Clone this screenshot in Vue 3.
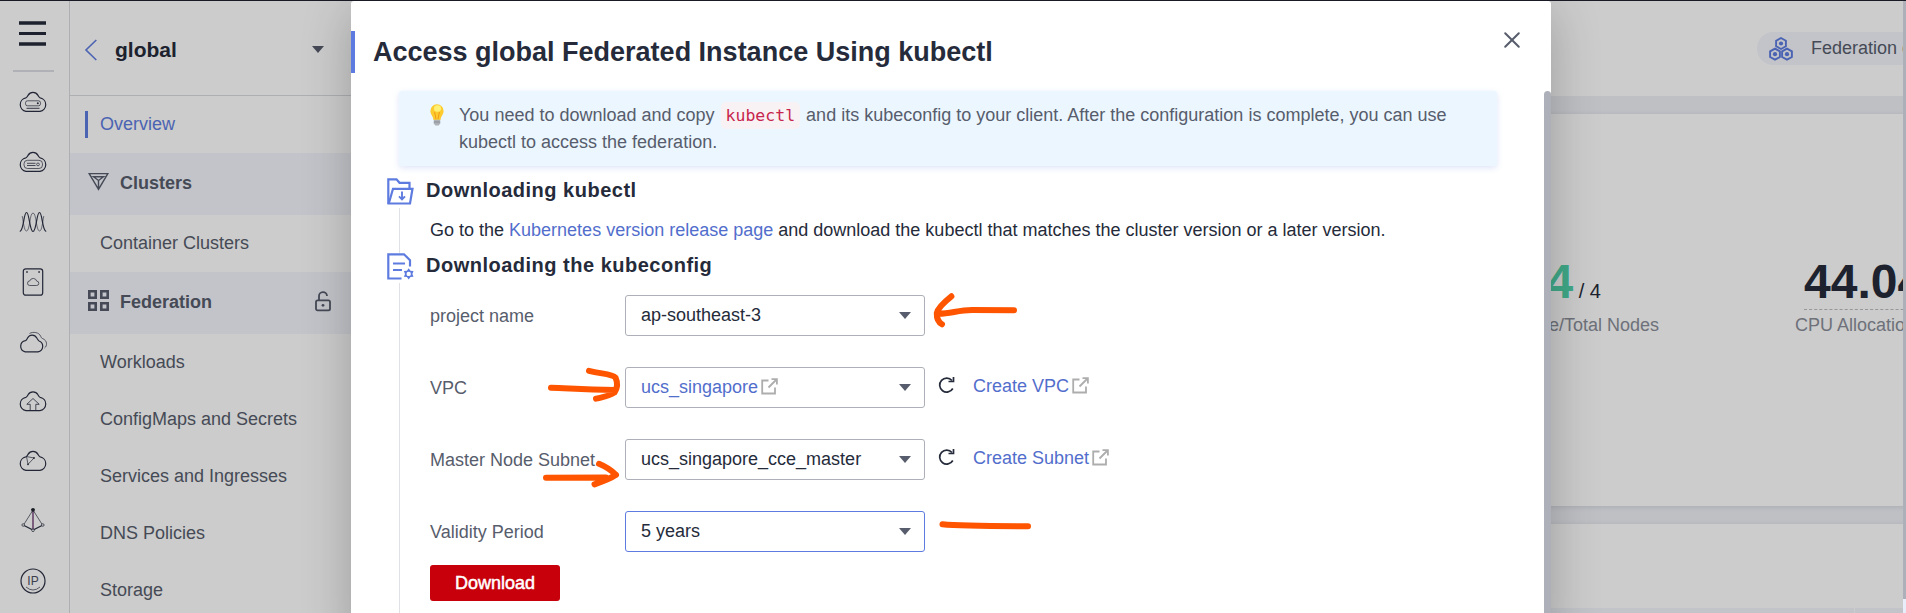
<script setup>
const navItems = [
  { text: 'Overview', kind: 'active' },
  { text: 'Clusters', kind: 'group', icon: 'clusters' },
  { text: 'Container Clusters', kind: 'item' },
  { text: 'Federation', kind: 'group', icon: 'grid', lock: true },
  { text: 'Workloads', kind: 'item' },
  { text: 'ConfigMaps and Secrets', kind: 'item' },
  { text: 'Services and Ingresses', kind: 'item' },
  { text: 'DNS Policies', kind: 'item' },
  { text: 'Storage', kind: 'item' },
]
const rail = ['server', 'server2', 'wave', 'disk', 'clouds', 'upload', 'cdn', 'pyramid', 'ip']
const fields = [
  { label: 'project name', value: 'ap-southeast-3' },
  { label: 'VPC', value: 'ucs_singapore', link: true, create: 'Create VPC' },
  { label: 'Master Node Subnet', value: 'ucs_singapore_cce_master', create: 'Create Subnet' },
  { label: 'Validity Period', value: '5 years', focus: true },
]
const cloud = 'M7 23.3H21A6.8 6.8 0 0 0 21.2 9.9C20 9.6 20 8.800 19 7.400C16.700 3.400 11.300 3.400 9 7.400C8 8.800 8 9.600 6.800 9.900A6.800 6.800 0 0 0 7 23.300Z'
</script>

<template>
  <div class="screen">
    <aside class="rail">
      <svg class="burger" width="27" height="25" viewBox="0 0 27 25" fill="#252b3a"><path d="M0 .3H27V3.700H0zM0 11H27V14H0zM0 21.300H27V24.700H0z" /></svg>
      <div class="rule"></div>
      <div v-for="name in rail" :key="name" class="rail-cell">
        <svg width="28" height="28" viewBox="0 0 28 28" fill="none" stroke="#2b3044" stroke-width="1.200">
          <g v-if="name === 'server'">
            <path :d="cloud" />
            <rect x="6.500" y="12.800" width="15" height="5" rx="2" stroke-width=".7" />
            <circle cx="18.800" cy="15.300" r="1" fill="#2b3044" stroke="none" />
            <path d="M7.500 20.300h13" stroke-width=".9" />
          </g>
          <g v-else-if="name === 'server2'">
            <path :d="cloud" />
            <rect x="5" y="12.300" width="18.500" height="8.200" rx="3.500" stroke-width=".7" />
            <path d="M8 15.300h8.500M8 17.500h8.500" stroke-width=".8" />
            <circle cx="19" cy="16.400" r="1.400" stroke-width=".7" />
          </g>
          <g v-else-if="name === 'wave'">
            <path d="M.8 23.500C5 22.500 4.500 4.500 7.500 4.500S10.500 23.500 14 23.500S17.500 4.500 20.500 4.500S23 22.500 27.200 23.500" />
            <path d="M3.200 8C4.500 14 5 23 7.500 23C11 23 10.500 5 14 5S17 23 20.500 23C23 23 23.500 14 24.800 8" stroke-width=".6" />
          </g>
          <g v-else-if="name === 'disk'">
            <rect x="4.300" y=".8" width="19.400" height="26.400" rx="2.500" />
            <path d="M10.800 17.500h6.700a2.200 2.200 0 0 0 .2-4.400a3.600 3.600 0 0 0-6.900-.2a2.300 2.300 0 0 0 0 4.600Z" stroke-width=".7" />
            <path d="M7.200 4h1.600M19.300 4h1.600" stroke-width="1.600" />
          </g>
          <g v-else-if="name === 'clouds'">
            <path d="M6.200 23.800H19A5.600 5.600 0 0 0 20 13C19.400 13 19 11.800 18 10.200C15.500 5.800 10.700 6.300 8.700 9.800C7.800 11.500 7.500 12.400 6.500 12.600A5.700 5.700 0 0 0 6.200 23.800Z" />
            <path d="M10.500 5.500C14 3.500 20 4 21.800 8.500C22.300 9.700 22.500 10 23.500 10.500C28.500 12.500 28.500 18 25.500 20" stroke-width=".7" />
          </g>
          <g v-else-if="name === 'upload'">
            <path :d="cloud" transform="translate(0 .4)" />
            <path d="M11.200 23.500V17.300H7.800L14 11.500L20.200 17.300H16.800V23.500" stroke-width=".8" />
          </g>
          <g v-else-if="name === 'cdn'">
            <path :d="cloud" />
            <path d="M7.500 9.500L15 11L9 17.300Z" stroke-width=".7" />
            <circle cx="15" cy="11" r=".9" fill="#2b3044" stroke="none" />
            <circle cx="9" cy="17.300" r=".9" fill="#2b3044" stroke="none" />
          </g>
          <g v-else-if="name === 'pyramid'">
            <path d="M14 3L4.500 18M14 3L23.500 18" stroke-width=".7" />
            <path d="M14 3V22" stroke="#632a68" stroke-width="1.300" />
            <path d="M5 18.500L14 23L23 18.500" />
            <circle cx="14" cy="2.800" r="1.900" fill="#20232f" stroke="none" />
            <g fill="#fff" stroke-width=".7"><circle cx="4.200" cy="18" r="1.300" /><circle cx="14" cy="23.300" r="1.300" /><circle cx="23.800" cy="18" r="1.300" /></g>
          </g>
          <g v-else>
            <circle cx="14" cy="14" r="12" />
            <path d="M7 20Q14 26 21 20" stroke-width=".7" />
            <text class="ip" x="14" y="17.800" text-anchor="middle">IP</text>
          </g>
        </svg>
      </div>
    </aside>

    <nav class="nav">
      <header class="nav-head">
        <svg width="12" height="22" viewBox="0 0 12 22" fill="none" stroke="#5e7ce0" stroke-width="1.600"><path d="M11.300 1L1 11L11.300 21" /></svg>
        <b>global</b>
        <i class="caret"></i>
      </header>
      <div v-for="n in navItems" :key="n.text" class="nav-row" :class="n.kind">
        <svg v-if="n.icon === 'clusters'" class="nav-icon" width="21" height="22" viewBox="0 0 21 22" fill="none" stroke="#575d6c" stroke-width="1.400">
          <path d="M1.200 3.600H19.800L10.500 19.300ZM5.500 6.800H15.500L10.500 10.500ZM10.500 10.500V18.500" />
        </svg>
        <svg v-else-if="n.icon === 'grid'" class="nav-icon" width="21" height="22" viewBox="0 0 21 22" fill="none" stroke="#575d6c" stroke-width="2.600">
          <path d="M1.300 2.300h6.400v6.400h-6.400zM13.300 2.300h6.400v6.400h-6.400zM1.300 14.300h6.400v6.400h-6.400zM13.300 14.300h6.400v6.400h-6.400z" />
        </svg>
        <span>{{ n.text }}</span>
        <svg v-if="n.lock" class="lock" width="16" height="20" viewBox="0 0 16 20" fill="none" stroke="#575d6c" stroke-width="1.800">
          <rect x="1" y="9.300" width="14" height="10" rx="1.600" /><path d="M4 9V5.300A4 4 0 0 1 12 5" /><circle cx="8" cy="14.300" r="1.400" fill="#575d6c" stroke="none" />
        </svg>
      </div>
    </nav>

    <main class="main">
      <div class="topbar">
        <div class="pill">
          <svg width="24" height="24" viewBox="0 0 24 24" fill="none" stroke="#5e7ce0" stroke-width="1.900">
            <g v-for="(p, i) in [[12, 6.5], [6, 17.2], [18, 17.2]]" :key="i" :transform="`translate(${p[0]} ${p[1]})`">
              <path d="M0-5.500L4.900-2.800V2.800L0 5.500L-4.900 2.800V-2.800Z" /><circle r="2.100" fill="#5e7ce0" stroke="none" />
            </g>
          </svg>
          <span>Federation enabled</span>
        </div>
      </div>
      <section class="card stats">
        <div class="stat nodes">
          <div class="num"><b>4</b><span> / 4</span></div>
          <label>Available/Total Nodes</label>
        </div>
        <div class="stat cpu">
          <div class="num"><b>44.04</b></div>
          <label>CPU Allocation</label>
        </div>
      </section>
      <section class="card lower"><div class="thead"><i></i></div></section>
    </main>

    <div class="mask"></div>
    <div class="page-scroll"><i></i></div>

    <div class="dialog">
      <header class="dialog-head">
        <h1>Access global Federated Instance Using kubectl</h1>
        <svg class="close" width="16" height="16" viewBox="0 0 16 16" stroke="#575d6c" stroke-width="2" stroke-linecap="round"><path d="M1.200 1.200L14.800 14.800M14.800 1.200L1.200 14.800" /></svg>
      </header>
      <div class="body">
        <div class="info">
          <svg width="14" height="22" viewBox="0 0 14 22">
            <path d="M7 .3A6.600 6.600 0 0 0 .4 7C.4 10.300 3 12 3.500 16H10.500C11 12 13.600 10.300 13.600 7A6.600 6.600 0 0 0 7 .3Z" fill="#fdcb2e" />
            <ellipse cx="7.500" cy="4.500" rx="3.500" ry="3.200" fill="#fff176" />
            <path d="M4.600 8L6 15M9.400 8L8 15" stroke="#f29b18" stroke-width="1" />
            <path d="M3.800 15.800H10.200V19.500L8.700 21.500H5.300L3.800 19.500Z" fill="#aeb2b8" />
            <path d="M3.800 18H10.200" stroke="#7d858c" stroke-width=".8" />
          </svg>
          <p>You need to download and copy <code>kubectl</code> and its kubeconfig to your client. After the configuration is complete, you can use kubectl to access the federation.</p>
        </div>

        <div class="step first">
          <div class="side">
            <svg width="27" height="27" viewBox="0 0 27 27" fill="none" stroke="#5e7ce0" stroke-width="2.200">
              <path d="M1.300 26V1.300H9.500L12.500 4.800H22.500V10.500" /><path d="M1.800 25.500L6 10.800H25.500L23 25.500Z" /><path d="M15 13.500V21M12 18.300L15 21.300L18 18.300" stroke-width="1.900" />
            </svg>
            <i></i>
          </div>
          <div class="content">
            <h2>Downloading kubectl</h2>
            <p class="para">Go to the <a>Kubernetes version release page</a> and download the kubectl that matches the cluster version or a later version.</p>
          </div>
        </div>

        <div class="step second">
          <div class="side">
            <svg width="27" height="27" viewBox="0 0 27 27" fill="none" stroke="#5e7ce0" stroke-width="2.200">
              <path d="M14.500 25.500H1.300V1.300H17L23 7.300V13.500" /><path d="M6 10.500H18M6 17H15" />
              <path d="M21.700 15.300L23.500 17.700L26.500 18L25.400 20.900L26.500 23.700L23.500 24L21.700 26.500L19.900 24L16.900 23.700L18 20.900L16.900 18L19.900 17.700Z" fill="#5e7ce0" stroke="none" />
              <circle cx="21.700" cy="20.900" r="2.200" fill="#fff" stroke="none" />
            </svg>
            <i></i>
          </div>
          <div class="content">
            <h2>Downloading the kubeconfig</h2>
            <div class="form">
              <div v-for="f in fields" :key="f.label" class="field">
                <label>{{ f.label }}</label>
                <div class="select" :class="{ focus: f.focus }">
                  <span :class="{ link: f.link }">{{ f.value }}</span>
                  <svg v-if="f.link" class="ext" width="17" height="17" viewBox="0 0 17 17" fill="none" stroke="#adadad" stroke-width="1.800"><path d="M7.500 2.500H1.200V15.500H14V9.500" /><path d="M7.500 9.500L15.500 1.500M10.500 1.200H15.900V6.500" /></svg>
                  <i class="caret"></i>
                </div>
                <template v-if="f.create">
                  <svg class="refresh" width="17" height="18" viewBox="0 0 17 18" fill="none" stroke="#252b3a" stroke-width="1.700"><path d="M14.800 12.500A7 7 0 1 1 14 4.500" /><path d="M15.500 1V5.500H10.500" /></svg>
                  <a>{{ f.create }}</a>
                  <svg class="ext out" width="17" height="17" viewBox="0 0 17 17" fill="none" stroke="#adadad" stroke-width="1.800"><path d="M7.500 2.500H1.200V15.500H14V9.500" /><path d="M7.500 9.500L15.500 1.500M10.500 1.200H15.900V6.500" /></svg>
                </template>
              </div>
            </div>
            <button>Download</button>
          </div>
        </div>
      </div>
      <div class="dialog-scroll"></div>
    </div>

    <!-- hand-drawn markers -->
    <svg class="ink" width="1906" height="613" viewBox="0 0 1906 613" fill="none" stroke="#ff5500" stroke-width="6" stroke-linecap="round" stroke-linejoin="round">
      <path d="M951.400 296.300Q938 307 936.800 313Q936.500 321 942 324.300M938 313.700C950 314 958 310 972 310L1014 310.300" />
      <path d="M551 387.800C567 388 580 389.800 615 390M589 370.800C602 374 612 374 615.500 377.500C617.500 382 617.500 388 614.500 392.500C610 396 603 397 596 398.700" />
      <path d="M546 477.800L606 477.500M599 463.800Q609 468 616 474.800M616 474.800Q610 479 594.500 484.300" />
      <path d="M942.500 524.300Q960 526.200 1028 526.200" />
    </svg>
  </div>
</template>

<style>
html, body { overflow: hidden; }
</style>

<style scoped>
* { box-sizing: border-box; }
.screen { position: relative; display: flex; width: 1906px; height: 613px; overflow: hidden; background: #fff; border-top: 1px solid #191a25; font: 18px/27px "Liberation Sans", Arial, sans-serif; color: #252b3a; }
p, h1, h2 { margin: 0; }
svg { display: block; flex: none; overflow: visible; }
a, .link { color: #526ecc; }
.caret { width: 0; height: 0; border: 6px solid transparent; border-top: 7px solid #575d6c; border-bottom: 0; }

.rail { width: 70px; flex: none; border-right: 1px solid #dadbe0; display: flex; flex-direction: column; align-items: flex-start; padding-top: 20px; }
.burger { margin-left: 19px; }
.rule { width: 41px; height: 2px; flex: none; margin: 24px 0 0 13px; background: #dddee4; }
.rail-cell { width: 65px; height: 59.900px; display: flex; align-items: center; justify-content: center; flex: none; }
.ip { font-size: 12px; font-weight: 400; fill: #4b5062; stroke: none; }

.nav { width: 281px; flex: none; }
.nav-head { height: 95px; border-bottom: 1px solid #dadbe0; display: flex; align-items: center; padding: 4px 27px 0 15px; }
.nav-head b { font-size: 21px; margin: -1px 0 0 18px; }
.nav-head .caret { margin: -1px 0 0 auto; }
.nav-row { height: 57px; display: flex; align-items: center; padding: 0 0 1px 30px; color: #575d6c; }
.nav-row.active { color: #5e7ce0; padding-left: 15px; }
.nav-row.active::before { content: ""; width: 3px; height: 27px; background: #5e7ce0; margin-right: 12px; }
.nav-row.group { height: 62px; background: #f3f5fc; font-weight: 700; padding: 0 20px 2px 18px; }
.nav-row.group span { margin-left: 11px; }
.nav-icon { margin-top: -4px; }
.lock { margin-left: auto; margin-top: -3px; }

.main { flex: 1; min-width: 0; background: #eef0f6; overflow: hidden; }
.topbar { height: 95px; background: #fff; padding: 31px 0 0 1406px; margin-bottom: 18px; }
.pill { width: 240px; height: 33px; border-radius: 17px; background: #f3f5fc; color: #575d6c; display: flex; align-items: center; padding-left: 12px; gap: 18px; white-space: nowrap; }
.card { background: #fff; box-shadow: 0 1px 5px rgba(50, 55, 80, .13); }
.stats { height: 392px; display: flex; padding: 142px 0 0 1082px; }
.stat { flex: none; display: flex; flex-direction: column; white-space: nowrap; }
.stat label { color: #8a8e99; }
.nodes { width: 226px; align-items: flex-end; }
.nodes .num { margin-right: 58px; }
.nodes b { color: #50d4ab; }
.num { height: 54px; line-height: 52px; font-size: 20px; white-space: pre; margin-bottom: 2px; }
.num b { font-size: 48px; }
.cpu { margin-left: 136px; }
.cpu .num { margin-left: 9px; border-bottom: 1px dashed #bbbdc2; }
.lower { height: 120px; margin-top: 18px; padding-top: 84px; }
.thead { height: 30px; background: #f3f5fc; padding-left: 1503px; }
.thead i { display: block; width: 1px; height: 30px; background: #fff; }

.mask { position: absolute; inset: 0; background: rgba(0, 0, 0, .2); }
.page-scroll { position: absolute; right: 0; top: -1px; width: 3px; height: 613px; background: #e9edfa; }
.page-scroll i { display: block; height: 599px; background: #adb0b8; }

.dialog { position: absolute; left: 351px; top: 0; width: 1200px; height: 640px; background: #fff; border-radius: 3px; box-shadow: 0 10px 50px rgba(0, 0, 0, .24); }
.dialog-head { height: 90px; padding-top: 30px; display: flex; align-items: flex-start; }
.dialog-head h1 { font-size: 27px; line-height: 42px; height: 42px; border-left: 4px solid #5e7ce0; padding-left: 18px; white-space: nowrap; }
.close { margin: 1px 31px 0 auto; }
.body { padding-left: 36px; }
.info { width: 1098px; height: 75px; margin-left: 12px; background: #ebf6ff; border-radius: 3px; box-shadow: 0 2px 6px rgba(94, 124, 224, .2); display: flex; padding: 10.500px 30px 0 31px; color: #575d6c; }
.info svg { margin: 2.500px 15px 0 0; }
.info p { width: 1010px; }
.info code { font: 16.500px/26px "DejaVu Sans Mono", monospace; color: #c7254e; background: #f9f2f4; border-radius: 5px; padding: 4px 5px; margin: 0 1px; }
.step { display: flex; }
.first { height: 75px; margin-top: 12px; }
.second { height: 400px; }
.side { width: 27px; display: flex; flex-direction: column; }
.side i { width: 1px; flex: 1; background: #dfe1e6; margin: 3px 0 0 12px; }
.content { padding-left: 12px; }
h2 { font-size: 20px; line-height: 24px; letter-spacing: .5px; white-space: nowrap; }
.para { margin: 14.500px 0 0 4px; white-space: nowrap; }
.form { margin: 18px 0 0 4px; display: flex; flex-direction: column; gap: 31px; }
.field { display: flex; align-items: center; height: 41px; white-space: nowrap; }
.field label { width: 195px; color: #575d6c; padding-top: 1px; }
.select { width: 300px; height: 41px; border: 1px solid #adb0b8; border-radius: 3px; display: flex; align-items: center; padding: 0 13px 1px 15px; }
.select.focus { border-color: #5e7ce0; }
.select .caret { margin-left: auto; }
.ext { margin: -2px 0 0 3px; }
.ext.out { margin-top: -4px; }
.refresh { margin: -5px 18px 0 13px; }
.field a { margin-top: -3px; }
button { display: block; width: 130px; height: 36px; margin: 13px 0 0 4px; border: 0; border-radius: 3px; background: #c7000b; color: #fff; font: 18px "Liberation Sans", Arial, sans-serif; -webkit-text-stroke: .5px #fff; }
.dialog-scroll { position: absolute; right: 0; top: 90px; width: 7px; height: 550px; border-radius: 4px; background: #adb0b8; }
.ink { position: absolute; left: 0; top: -1px; }
</style>
